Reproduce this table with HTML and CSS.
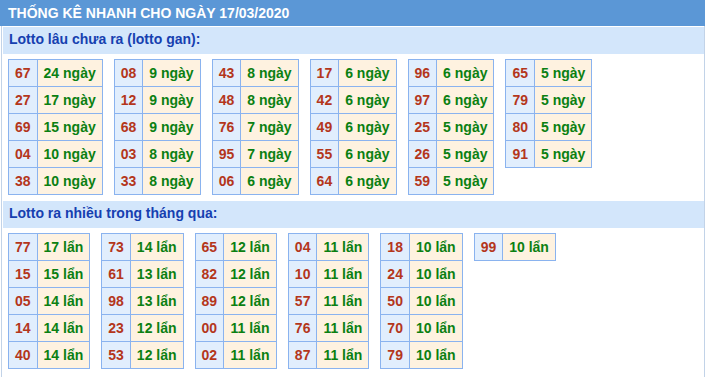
FILE: index.html
```html
<!DOCTYPE html>
<html lang="vi">
<head>
<meta charset="utf-8">
<title>Thống kê nhanh</title>
<link rel="stylesheet" href="styles.css">
</head>
<body>
<div class="page">
  <div class="header">THỐNG KÊ NHANH CHO NGÀY 17/03/2020</div>
  <div class="body">
    <div class="bar">Lotto lâu chưa ra (lotto gan):</div>
    <div class="tables">
      <table class="stat"><tr><td class="num">67</td><td class="val">24 ngày</td></tr><tr><td class="num">27</td><td class="val">17 ngày</td></tr><tr><td class="num">69</td><td class="val">15 ngày</td></tr><tr><td class="num">04</td><td class="val">10 ngày</td></tr><tr><td class="num">38</td><td class="val">10 ngày</td></tr></table>
      <table class="stat"><tr><td class="num">08</td><td class="val">9 ngày</td></tr><tr><td class="num">12</td><td class="val">9 ngày</td></tr><tr><td class="num">68</td><td class="val">9 ngày</td></tr><tr><td class="num">03</td><td class="val">8 ngày</td></tr><tr><td class="num">33</td><td class="val">8 ngày</td></tr></table>
      <table class="stat"><tr><td class="num">43</td><td class="val">8 ngày</td></tr><tr><td class="num">48</td><td class="val">8 ngày</td></tr><tr><td class="num">76</td><td class="val">7 ngày</td></tr><tr><td class="num">95</td><td class="val">7 ngày</td></tr><tr><td class="num">06</td><td class="val">6 ngày</td></tr></table>
      <table class="stat"><tr><td class="num">17</td><td class="val">6 ngày</td></tr><tr><td class="num">42</td><td class="val">6 ngày</td></tr><tr><td class="num">49</td><td class="val">6 ngày</td></tr><tr><td class="num">55</td><td class="val">6 ngày</td></tr><tr><td class="num">64</td><td class="val">6 ngày</td></tr></table>
      <table class="stat"><tr><td class="num">96</td><td class="val">6 ngày</td></tr><tr><td class="num">97</td><td class="val">6 ngày</td></tr><tr><td class="num">25</td><td class="val">5 ngày</td></tr><tr><td class="num">26</td><td class="val">5 ngày</td></tr><tr><td class="num">59</td><td class="val">5 ngày</td></tr></table>
      <table class="stat"><tr><td class="num">65</td><td class="val">5 ngày</td></tr><tr><td class="num">79</td><td class="val">5 ngày</td></tr><tr><td class="num">80</td><td class="val">5 ngày</td></tr><tr><td class="num">91</td><td class="val">5 ngày</td></tr></table>
    </div>
    <div class="bar">Lotto ra nhiều trong tháng qua:</div>
    <div class="tables">
      <table class="stat"><tr><td class="num">77</td><td class="val">17 lẩn</td></tr><tr><td class="num">15</td><td class="val">15 lẩn</td></tr><tr><td class="num">05</td><td class="val">14 lẩn</td></tr><tr><td class="num">14</td><td class="val">14 lẩn</td></tr><tr><td class="num">40</td><td class="val">14 lẩn</td></tr></table>
      <table class="stat"><tr><td class="num">73</td><td class="val">14 lẩn</td></tr><tr><td class="num">61</td><td class="val">13 lẩn</td></tr><tr><td class="num">98</td><td class="val">13 lẩn</td></tr><tr><td class="num">23</td><td class="val">12 lẩn</td></tr><tr><td class="num">53</td><td class="val">12 lẩn</td></tr></table>
      <table class="stat"><tr><td class="num">65</td><td class="val">12 lẩn</td></tr><tr><td class="num">82</td><td class="val">12 lẩn</td></tr><tr><td class="num">89</td><td class="val">12 lẩn</td></tr><tr><td class="num">00</td><td class="val">11 lẩn</td></tr><tr><td class="num">02</td><td class="val">11 lẩn</td></tr></table>
      <table class="stat"><tr><td class="num">04</td><td class="val">11 lẩn</td></tr><tr><td class="num">10</td><td class="val">11 lẩn</td></tr><tr><td class="num">57</td><td class="val">11 lẩn</td></tr><tr><td class="num">76</td><td class="val">11 lẩn</td></tr><tr><td class="num">87</td><td class="val">11 lẩn</td></tr></table>
      <table class="stat"><tr><td class="num">18</td><td class="val">10 lẩn</td></tr><tr><td class="num">24</td><td class="val">10 lẩn</td></tr><tr><td class="num">50</td><td class="val">10 lẩn</td></tr><tr><td class="num">70</td><td class="val">10 lẩn</td></tr><tr><td class="num">79</td><td class="val">10 lẩn</td></tr></table>
      <table class="stat"><tr><td class="num">99</td><td class="val">10 lẩn</td></tr></table>
    </div>
  </div>
</div>
</body>
</html>
```
FILE: styles.css
```css
html, body {
  margin: 0;
  padding: 0;
  background: #ffffff;
}
body {
  font-family: "Liberation Sans", Arial, sans-serif;
  font-size: 14px;
  font-weight: bold;
}
.page {
  width: 705px;
}
.header {
  height: 26px;
  line-height: 26px;
  background: #5b97d6;
  color: #ffffff;
  padding-left: 8px;
  white-space: nowrap;
}
.body {
  margin-left: 1px;
  border-left: 1px solid #c2d3e8;
  border-right: 1px solid #c2d3e8;
  padding-top: 1px;
  padding-bottom: 12px;
}
.bar {
  margin-left: 1px;
  height: 27px;
  line-height: 25px;
  background: #d3e6fb;
  color: #1640b0;
  padding-left: 6px;
}
.tables {
  display: flex;
  align-items: flex-start;
  gap: 11px;
  padding-left: 6px;
  margin-top: 5px;
  margin-bottom: 6px;
}
.stat {
  border-collapse: collapse;
  border: 1px solid #8ab3ef;
}
.stat td {
  border: 1px solid #8ab3ef;
  height: 26px;
  padding: 0 6px;
  line-height: 16px;
  text-align: center;
  vertical-align: middle;
  white-space: nowrap;
}
.num {
  background: #e1eefd;
  color: #b4361b;
}
.val {
  background: #fef2e0;
  color: #0b8012;
}
```
